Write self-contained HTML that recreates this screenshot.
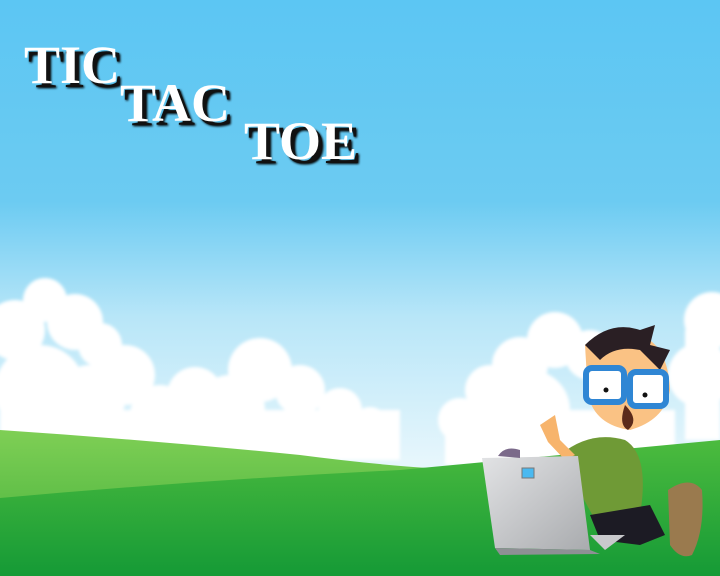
<!DOCTYPE html>
<html><head><style>
html,body{margin:0;padding:0;width:720px;height:576px;overflow:hidden}
.t{position:absolute;font-family:"Liberation Serif",serif;font-weight:bold;font-size:54px;color:#fff;letter-spacing:0px;text-shadow:4px 4px 0 #111,5px 5px 2px #000;line-height:1}
</style></head><body>
<svg width="720" height="576" style="position:absolute;left:0;top:0">
<defs>
<linearGradient id="sky" x1="0" y1="0" x2="0" y2="1">
<stop offset="0" stop-color="#5cc6f3"/><stop offset="0.35" stop-color="#6ccbf2"/><stop offset="0.55" stop-color="#b8e6f8"/><stop offset="0.8" stop-color="#e6f6fc"/></linearGradient>
<linearGradient id="g1" x1="0" y1="0" x2="0" y2="1"><stop offset="0" stop-color="#7fcf55"/><stop offset="1" stop-color="#3fae3a"/></linearGradient>
<linearGradient id="g2" x1="0" y1="0" x2="0" y2="1"><stop offset="0" stop-color="#4cbb3e"/><stop offset="1" stop-color="#159a36"/></linearGradient>
<linearGradient id="lap" x1="0" y1="0" x2="1" y2="1"><stop offset="0" stop-color="#e2e3e5"/><stop offset="1" stop-color="#a9abae"/></linearGradient>
<filter id="bl"><feGaussianBlur stdDeviation="1.5"/></filter>
</defs>
<rect width="720" height="576" fill="url(#sky)"/>
<g fill="#fff" filter="url(#bl)">
<circle cx="45" cy="300" r="22"/><circle cx="75" cy="322" r="28"/><circle cx="15" cy="330" r="30"/><circle cx="100" cy="345" r="22"/>
<circle cx="125" cy="375" r="30"/><circle cx="40" cy="390" r="45"/><circle cx="90" cy="400" r="35"/>
<circle cx="195" cy="395" r="28"/><circle cx="260" cy="370" r="32"/><circle cx="300" cy="390" r="25"/><circle cx="340" cy="410" r="22"/><circle cx="370" cy="425" r="18"/>
<circle cx="230" cy="410" r="35"/><circle cx="160" cy="415" r="30"/>
<rect x="0" y="410" width="400" height="50"/>
<circle cx="555" cy="340" r="28"/><circle cx="520" cy="365" r="28"/><circle cx="590" cy="355" r="25"/><circle cx="490" cy="390" r="25"/><circle cx="460" cy="420" r="22"/><circle cx="530" cy="410" r="40"/>
<rect x="445" y="410" width="230" height="55"/>
<circle cx="712" cy="320" r="28"/><circle cx="700" cy="375" r="32"/><rect x="685" y="330" width="35" height="110"/>
</g>
<path d="M0 430 Q150 440 300 455 Q400 468 470 470 L470 576 L0 576Z" fill="url(#g1)"/>
<path d="M0 498 Q200 480 400 470 Q560 455 720 440 L720 576 L0 576Z" fill="url(#g2)"/>
<path d="M560 455 Q590 430 625 440 Q650 455 640 515 L595 520 Z" fill="#6f9a36"/>
<path d="M590 515 L650 505 L665 535 L640 545 L600 540Z" fill="#1c1b24"/>
<path d="M540 425 L555 415 L560 440 L575 455 L565 460 L548 442Z" fill="#f7b46c"/>
<path d="M585 345 Q600 330 640 335 Q668 345 670 390 Q665 420 630 430 Q595 425 588 395Z" fill="#fac284"/>
<path d="M585 345 Q610 320 640 330 L655 325 L650 345 L670 350 L660 370 L640 350 Q615 345 600 360 Z" fill="#2a1f24"/>
<rect x="586" y="368" width="38" height="34" rx="6" fill="#fff" stroke="#2f86d4" stroke-width="6"/>
<rect x="630" y="372" width="36" height="34" rx="6" fill="#fff" stroke="#2f86d4" stroke-width="6"/>
<circle cx="606" cy="390" r="2.5" fill="#111"/><circle cx="645" cy="395" r="2.5" fill="#111"/>
<path d="M625 405 Q640 420 628 430 Q618 425 625 405Z" fill="#5b2a1a"/>
<path d="M668 490 Q690 475 702 490 Q705 530 692 555 Q680 560 670 545Z" fill="#9a7a4e"/>
<path d="M482 458 L578 456 L590 550 L495 548 Z" fill="url(#lap)"/>
<path d="M590 550 L495 548 L500 555 L600 554 Z" fill="#8e9094"/>
<path d="M590 535 L625 535 L605 550 Z" fill="#c8c9cc"/>
<rect x="522" y="468" width="12" height="10" fill="#4ab9f0" stroke="#777"/>
<path d="M498 456 Q505 445 520 450 L520 458Z" fill="#7b6a8a"/>
</svg>
<div class="t" style="left:24px;top:38px">TIC</div>
<div class="t" style="left:120px;top:76px">TAC</div>
<div class="t" style="left:244px;top:114px">TOE</div>
</body></html>
